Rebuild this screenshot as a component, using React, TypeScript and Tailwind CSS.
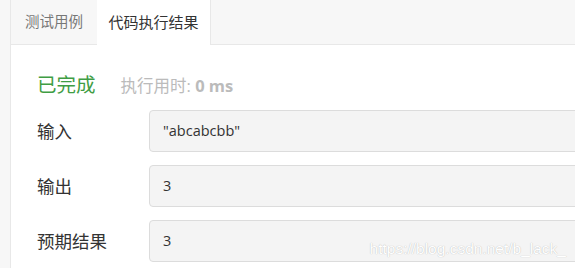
import React from "react";

const rows = [
  { label: "输入", value: "\"abcabcbb\"" },
  { label: "输出", value: "3" },
  { label: "预期结果", value: "3" },
];

export default function App() {
  return (
    <div
      className="flex h-[268px] w-[575px] overflow-hidden bg-[#f7f7f7] text-[#333]"
      style={{ fontFamily: '"Open Sans", "Noto Sans CJK SC", sans-serif' }}
    >
      <div className="w-[11px] shrink-0 border-r border-[#e8e8e8]" />
      <div className="flex min-w-0 flex-1 flex-col">
        {/* tabs */}
        <div className="flex h-[45px] shrink-0">
          <div className="flex w-[86px] items-center justify-center border-b border-[#e8e8e8] bg-[#f7f7f7] text-[14.5px] text-[#777]">
            测试用例
          </div>
          <div className="flex w-[114px] items-center justify-center border-r border-[#e8e8e8] bg-white text-[15px] text-[#333]">
            代码执行结果
          </div>
          <div className="flex-1 border-b border-[#e8e8e8] bg-[#f7f7f7]" />
        </div>

        {/* result */}
        <div className="relative flex-1 bg-white pl-[26px]">
          <div className="flex h-[49px] items-end gap-[25px]">
            <span className="text-[19.5px] leading-none text-[#3f9d44]">已完成</span>
            <span className="text-[16.5px] leading-none text-[#bbb]">
              执行用时: <b className="font-bold">0 ms</b>
            </span>
          </div>

          <div className="mt-[16px] flex flex-col gap-[13px]">
            {rows.map((r) => (
              <div key={r.label} className="flex items-center">
                <div className="w-[112px] shrink-0 text-[17.5px]">{r.label}</div>
                <div className="-mr-[10px] flex h-[42px] flex-1 items-center rounded-[4px] border border-[#dcdcdc] bg-[#f4f4f4] pl-[13px] text-[14.5px] text-[#333]">
                  {r.value}
                </div>
              </div>
            ))}
          </div>

          <div
            className="absolute right-[9px] bottom-[8px] text-[15.5px] text-white [text-shadow:0_0_1px_rgba(0,0,0,0.3)]"
            style={{ fontFamily: '"Liberation Sans", Arial, sans-serif' }}
          >
            https://blog.csdn.net/b_lack_
          </div>
        </div>
      </div>
    </div>
  );
}
